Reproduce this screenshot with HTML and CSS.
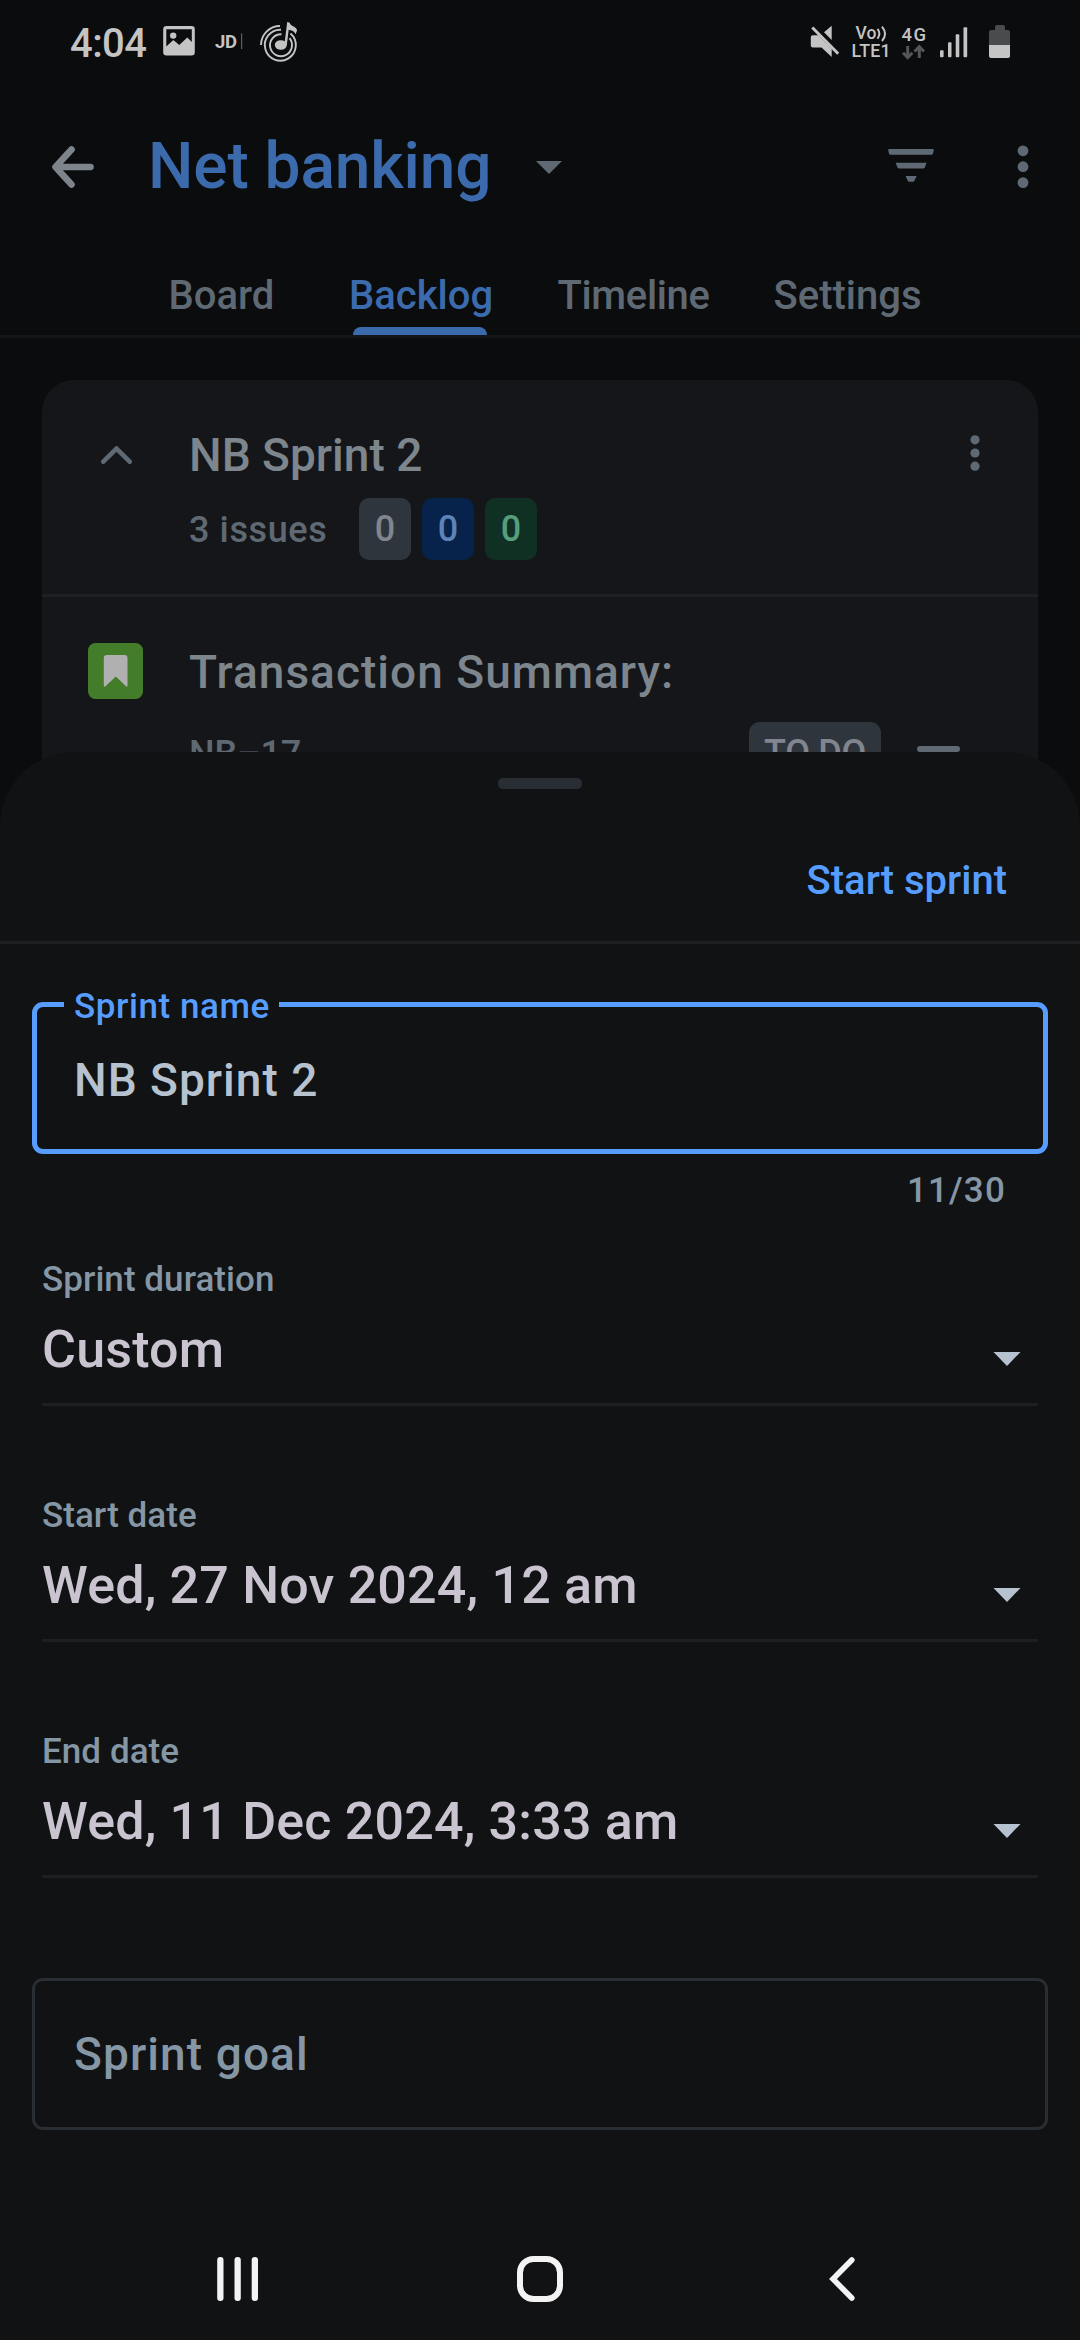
FILE: index.html
```html
<!DOCTYPE html>
<html lang="en">
<head>
<meta charset="utf-8">
<title>Net banking – Start sprint</title>
<link rel="stylesheet" href="styles.css">
</head>
<body>
<main class="screen">
  <section class="app">
    <div class="status">
      <span class="clock">4:04</span>
      <svg class="status-left" width="145" height="84" viewBox="160 0 145 84">
        <path fill-rule="evenodd" d="M166.500 26h25a3.300 3.300 0 0 1 3.300 3.300v23a3.300 3.300 0 0 1-3.300 3.300h-25a3.300 3.300 0 0 1-3.300-3.300v-23a3.300 3.300 0 0 1 3.300-3.300zM166.300 29.300v17.200l7-6.500 6 5 8-7.500 4.500 4.500v-12.700z"/>
        <circle cx="173.200" cy="35.600" r="3.200"/>
        <text x="215" y="48" font-size="18.500" font-weight="700" textLength="22">JD</text>
        <path d="M241 33.500h1.200v15.500h-1.200z" opacity=".45"/>
        <g fill="none" stroke="currentColor" stroke-width="1.900">
          <path d="M261 45A19 19 0 0 1 280 26"/>
          <path d="M290.500 33.500A15.500 15.500 0 1 1 281 29.700"/>
          <path d="M289.500 38.200A11 11 0 1 1 281.500 34.200"/>
        </g>
        <ellipse cx="280.800" cy="45" rx="6" ry="4.800"/>
        <path d="M284.300 45.500L287.200 22l2.600.8c.3 4 7.500 3.500 7.200 8l-1.500 3.500c-.8-3.200-4.500-4-6.800-4.500L286.800 45z"/>
      </svg>
      <svg class="status-right" width="205" height="84" viewBox="810 0 205 84">
        <path d="M812.800 35.300h5.400L831.700 49v8L821.500 47.500h-8.700q-2 0-2-2v-8.200q0-2 2-2zM824 32.200l7.700-6.500v14.300z"/>
        <path d="M812.300 27.500L838.200 53.800" fill="none" stroke="currentColor" stroke-width="3"/>
        <text x="855.500" y="39.300" font-size="17.500" font-weight="500">Vo</text>
        <path d="M877.500 28.800q3.600 4.600 0 10M882 26.700q6 7.300 0 14.300" fill="none" stroke="currentColor" stroke-width="2"/>
        <text x="851.500" y="57" font-size="17.800" font-weight="500" textLength="39">LTE1</text>
        <text x="901.500" y="40.700" font-size="18.500" font-weight="500" textLength="24.500">4G</text>
        <path d="M907.700 46v11M903 52.700l4.700 4.800 4.700-4.800M919.300 58V47M914.500 51.500l4.800-4.800 4.700 4.800" fill="none" stroke="#555658" stroke-width="3"/>
        <rect x="940" y="50.300" width="3.600" height="7" rx="1"/>
        <rect x="948" y="42.300" width="3.500" height="15" rx="1"/>
        <rect x="955.700" y="34.300" width="3.600" height="23" rx="1"/>
        <rect x="963.500" y="27.300" width="3.700" height="30" rx="1"/>
        <path fill="#4a4b4c" d="M989 46V32a2 2 0 0 1 2-2h4v-3a2 2 0 0 1 2-2h6a2 2 0 0 1 2 2v3h3a2 2 0 0 1 2 2v14z"/>
        <path d="M989 45h21v11a2 2 0 0 1-2 2h-17a2 2 0 0 1-2-2z"/>
      </svg>
    </div>

    <header class="appbar">
      <svg class="back" width="44" height="44" viewBox="0 0 44 44"><path d="M20.500 4.500L4.500 22L20.500 39.500M5 22H39.500" fill="none" stroke="currentColor" stroke-width="6.600" stroke-linecap="round" stroke-linejoin="round"/></svg>
      <h1 class="project">Net banking</h1>
      <svg class="project-caret" width="26" height="13" viewBox="0 0 26 13"><path d="M0 0h26L13 13z"/></svg>
      <svg class="filter" width="46" height="34" viewBox="0 0 46 34"><path d="M1.200 0h43.600q1.200 0 1 1.300l-.8 3.200q-.3 1.200-1.500 1.200H2.500q-1.200 0-1.500-1.200L.2 1.300Q0 0 1.200 0zM7.600 13.700h31L36.800 18.500q-.4 1-1.500 1H11q-1.100 0-1.500-1zM17.600 27h11l-2 4.500q-.6 1.200-1.800 1.200h-3.400q-1.200 0-1.800-1.200z"/></svg>
      <svg class="more" width="12" height="44" viewBox="0 0 12 44"><circle cx="6" cy="5.800" r="5.400"/><circle cx="6" cy="21.700" r="5.400"/><circle cx="6" cy="37.600" r="5.400"/></svg>
    </header>

    <nav class="tabs">
      <span class="tab">Board</span>
      <span class="tab tab-active">Backlog</span>
      <span class="tab tab-timeline">Timeline</span>
      <span class="tab">Settings</span>
    </nav>

    <article class="card">
      <div class="card-head">
        <svg class="chevron" width="31" height="18" viewBox="0 0 31 18"><path d="M2.300 15.700L15.500 2.600 28.700 15.700" fill="none" stroke="currentColor" stroke-width="4.600" stroke-linecap="round"/></svg>
        <div class="card-info">
          <h2 class="row-title">NB Sprint 2</h2>
          <div class="counts">
            <span class="issues">3 issues</span>
            <span class="badge badge-todo">0</span>
            <span class="badge badge-progress">0</span>
            <span class="badge badge-done">0</span>
          </div>
        </div>
        <svg class="card-more" width="10" height="36" viewBox="0 0 10 36"><circle cx="5" cy="4.800" r="4.600"/><circle cx="5" cy="18" r="4.600"/><circle cx="5" cy="31.200" r="4.600"/></svg>
      </div>
      <div class="issue">
        <svg class="story" width="55" height="56" viewBox="0 0 55 56"><rect width="55" height="56" rx="7.500" fill="#437d29"/><path d="M19 12h17.500q3 0 3 3v27q0 2.800-2 .8L27.800 33.500 18 42.800q-2.200 2-2.200-.8V15q0-3 3.200-3z" fill="#b0b0b0"/></svg>
        <div class="issue-info">
          <h3 class="row-title issue-title">Transaction Summary:</h3>
          <div class="issue-meta">
            <span class="issue-key">NB–17</span>
            <span class="issue-status">TO DO</span>
            <span class="priority"></span>
          </div>
        </div>
      </div>
    </article>
  </section>

  <section class="sheet">
    <div class="handle"></div>
    <div class="sheet-actions"><span class="start">Start sprint</span></div>

    <div class="field field-focus">
      <label class="field-label">Sprint name</label>
      <span class="field-value">NB Sprint 2</span>
    </div>
    <div class="counter">11/30</div>

    <div class="selects">
      <div class="select">
        <div class="select-label">Sprint duration</div>
        <div class="select-row"><span class="select-value">Custom</span><svg class="caret" width="28" height="14" viewBox="0 0 28 14"><path d="M.5 0h27L14 14z"/></svg></div>
      </div>
      <div class="select">
        <div class="select-label">Start date</div>
        <div class="select-row"><span class="select-value">Wed, 27 Nov 2024, 12 am</span><svg class="caret" width="28" height="14" viewBox="0 0 28 14"><path d="M.5 0h27L14 14z"/></svg></div>
      </div>
      <div class="select">
        <div class="select-label">End date</div>
        <div class="select-row"><span class="select-value">Wed, 11 Dec 2024, 3:33 am</span><svg class="caret" width="28" height="14" viewBox="0 0 28 14"><path d="M.5 0h27L14 14z"/></svg></div>
      </div>
    </div>

    <div class="field field-goal"><span class="goal-text">Sprint goal</span></div>

    <nav class="sysnav">
      <svg width="42" height="44" viewBox="0 0 42 44"><g><rect x="0.200" width="6.300" height="44" rx="3"/><rect x="17.500" width="6.300" height="44" rx="3"/><rect x="34.700" width="6.300" height="44" rx="3"/></g></svg>
      <svg width="48" height="48" viewBox="0 0 48 48"><rect x="4" y="4" width="40" height="40" rx="13.500" fill="none" stroke="currentColor" stroke-width="6"/></svg>
      <svg width="26" height="44" viewBox="0 0 26 44"><path d="M22.800 3L4 22L22.800 41" fill="none" stroke="currentColor" stroke-width="5.600" stroke-linecap="round"/></svg>
    </nav>
  </section>
</main>
</body>
</html>
```
FILE: styles.css
```css
* { box-sizing: border-box; }
body {
  margin: 0;
  background: #0b0c0e;
  font-family: Roboto, "Noto Sans", sans-serif;
  font-weight: 500;
}
h1, h2, h3 { margin: 0; font-weight: 500; }
svg { display: block; flex: none; fill: currentColor; }
span, label, h1, h2, h3 { white-space: nowrap; }

.screen {
  position: relative;
  width: 1080px;
  height: 2340px;
  overflow: hidden;
}
.app { display: flex; flex-direction: column; }

.status {
  display: flex;
  align-items: center;
  height: 84px;
  padding: 0 65px 0 70px;
  color: #c4c4c4;
}
.clock {
  width: 90px;
  padding-top: 3px;
  font-size: 40px;
  letter-spacing: -0.6px;
  line-height: 48px;
}
.status-right { margin-left: auto; }

.appbar {
  display: flex;
  align-items: center;
  height: 166px;
  padding: 0 51px;
  color: #5f6973;
}
.back { color: #7d848b; }
.project {
  margin-left: 53px;
  width: 388px;
  font-size: 64px;
  line-height: 76px;
  letter-spacing: -0.1px;
  color: #3c6bad;
}
.filter { margin: -3px 0 0 326px; }
.more { margin-left: auto; }

.tabs {
  display: grid;
  grid-template-columns: 187px 212px 213px 215px;
  height: 88px;
  padding: 6px 0 0 128px;
  border-bottom: 3px solid #14171a;
  color: #5f6973;
  font-size: 40px;
}
.tab { position: relative; line-height: 79px; text-align: center; }
.tab-timeline { letter-spacing: -0.35px; }
.tab-active { color: #3c6bad; }
.tab-active::after {
  content: "";
  position: absolute;
  left: 38px;
  bottom: 0;
  width: 134px;
  height: 8px;
  border-radius: 8px 8px 0 0;
  background: #3c6bad;
}

.card {
  margin: 42px 42px 0;
  border-radius: 32px 32px 0 0;
  background: #151619;
  color: #5f6973;
}
.card-head {
  display: flex;
  align-items: flex-start;
  height: 217px;
  padding: 48px 58px 0 59px;
  border-bottom: 3px solid #1d1f23;
}
.chevron { margin-top: 18px; }
.card-info { margin-left: 57px; }
.row-title {
  font-size: 46px;
  line-height: 54px;
  color: #7d858d;
}
.counts {
  display: flex;
  align-items: center;
  gap: 11px;
  margin-top: 16px;
  font-size: 36px;
}
.issues { width: 159px; padding-top: 2px; letter-spacing: 0.6px; }
.badge {
  width: 52px;
  height: 62px;
  border-radius: 10px;
  line-height: 62px;
  text-align: center;
}
.badge-todo { background: #2f353d; color: #80858e; }
.badge-progress { background: #07224b; color: #5f83b8; }
.badge-done { background: #103024; color: #559f7c; }
.card-more { margin: 7px 0 0 auto; }

.issue {
  display: flex;
  align-items: flex-start;
  height: 190px;
  padding: 46px 78px 0 46px;
}
.issue-info { flex: 1; margin: 2px 0 0 46px; }
.issue-title { letter-spacing: 1.03px; }
.issue-meta {
  display: flex;
  align-items: center;
  height: 62px;
  margin-top: 23px;
  font-size: 36px;
}
.issue-key { padding-top: 1px; }
.issue-status {
  width: 132px;
  height: 62px;
  margin-left: auto;
  border-radius: 11px;
  background: #2f353d;
  color: #80858e;
  letter-spacing: -0.3px;
  line-height: 62px;
  text-align: center;
}
.priority {
  width: 43px;
  height: 6px;
  margin: -8px 0 0 36px;
  border-radius: 3px;
  background: #5f6973;
}

.sheet {
  position: absolute;
  left: 0;
  right: 0;
  top: 752px;
  bottom: 0;
  display: flex;
  flex-direction: column;
  padding-top: 26px;
  border-radius: 74px 74px 0 0;
  background: #101214;
}
.handle {
  align-self: center;
  width: 84px;
  height: 11px;
  border-radius: 5px;
  background: #282e33;
}
.sheet-actions {
  display: flex;
  align-items: center;
  justify-content: flex-end;
  height: 155px;
  padding: 31px 73px 0 0;
  border-bottom: 3px solid #1d1f22;
}
.start { font-size: 40px; line-height: 48px; color: #579dff; }

.field {
  display: flex;
  align-items: center;
  height: 152px;
  margin: 0 32px;
  border-radius: 11px;
}
.field-focus {
  position: relative;
  margin-top: 58px;
  padding: 3px 37px 0;
  border: 5px solid #579dff;
}
.field-label {
  position: absolute;
  left: 27px;
  top: -20px;
  width: 215px;
  padding-left: 10px;
  background: #101214;
  color: #579dff;
  font-size: 35px;
  line-height: 40px;
  letter-spacing: 0.57px;
}
.field-value { font-size: 46px; letter-spacing: 1px; color: #b6c2cf; }
.counter {
  margin-top: 17px;
  padding-right: 74px;
  font-size: 35px;
  line-height: 40px;
  letter-spacing: 1.17px;
  text-align: right;
  color: #8596a5;
}

.selects {
  display: flex;
  flex-direction: column;
  gap: 90px;
  margin: 49px 42px 0;
}
.select { border-bottom: 3px solid #1d1f22; padding-bottom: 23px; }
.select-label {
  font-size: 35px;
  line-height: 40px;
  letter-spacing: 0.05px;
  color: #8596a5;
}
.select-row {
  display: flex;
  align-items: center;
  justify-content: space-between;
  height: 60px;
  margin-top: 20px;
  padding-right: 17px;
}
.select-value { font-size: 52px; line-height: 60px; letter-spacing: 0.18px; color: #cac4d0; }
.caret { margin-top: 17px; color: #b6c2cf; }

.field-goal {
  margin-top: 100px;
  padding-left: 39px;
  border: 3px solid #282e33;
}
.goal-text { font-size: 46px; letter-spacing: 1.1px; color: #8596a5; }

.sysnav {
  display: grid;
  grid-template-columns: repeat(3, 302px);
  place-items: center;
  height: 123px;
  margin-top: auto;
  padding-left: 87px;
  color: #f3f3f3;
}
```
